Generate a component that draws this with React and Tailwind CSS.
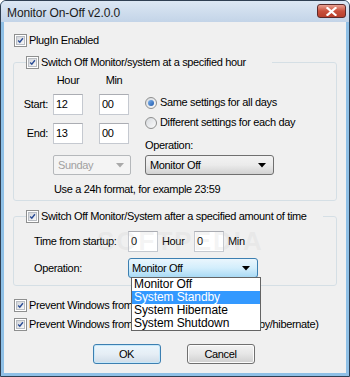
import React from "react";

function Check({ checked = true }) {
  return (
    <div className="w-[13px] h-[13px] shrink-0 border border-[#8e8f8f] bg-white p-[1px]">
      <div className="w-full h-full bg-gradient-to-br from-[#d2d5da] to-[#f8f8f8] border border-[#b9bdc3] flex items-center justify-center">
        {checked && (
          <svg width="9" height="9" viewBox="0 0 9 9">
            <path d="M1.5 4.6 L3.6 6.8 L7.6 1.6" fill="none" stroke="#2b4d96" strokeWidth="1.8" />
          </svg>
        )}
      </div>
    </div>
  );
}

function Radio({ on }) {
  return (
    <div className="w-[12px] h-[12px] shrink-0 rounded-full border border-[#8e8f8f] bg-gradient-to-br from-[#d7dade] to-[#fbfbfb] flex items-center justify-center">
      {on && <div className="w-[6px] h-[6px] rounded-full bg-gradient-to-br from-[#7fb3ec] to-[#1d5aae]" />}
    </div>
  );
}

function Input({ v, w = "w-[30px]" }) {
  return (
    <div className={`${w} h-[21px] bg-white border border-[#c5c9d0] border-t-[#abadb3] pl-[2px] pt-[3px] leading-[13px]`}>
      {v}
    </div>
  );
}

function Arrow({ c = "#000" }) {
  return (
    <svg width="8" height="5" viewBox="0 0 8 5" className="shrink-0">
      <path d="M0 0 H8 L4 4.5 Z" fill={c} />
    </svg>
  );
}

export default function App() {
  return (
    <div className="relative w-[350px] h-[377px] overflow-hidden bg-[#8fc0e6] border border-[#2f3f52] rounded-t-[6px] flex flex-col font-['Liberation_Sans',Arial,sans-serif] text-[11px] leading-[13px] tracking-[-0.35px] text-black">
      {/* title bar */}
      <div className="h-[21px] shrink-0 bg-gradient-to-b from-[#dce7f3] to-[#c3d4e8] flex items-start justify-between pl-[6px] pr-[3px]">
        <div className="text-[12px] leading-[14px] pt-[5px] tracking-[-0.1px] text-[#1a1a1a]">Monitor On-Off v2.0.0</div>
        <div className="mt-[3px] w-[29px] h-[14px] rounded-[3px] border border-[#5c2a2a] bg-gradient-to-b from-[#e8a193] via-[#c9503c] to-[#b8402c] flex items-center justify-center">
          <svg width="11" height="9" viewBox="0 0 11 9">
            <path d="M1.5 1 L9.5 8 M9.5 1 L1.5 8" stroke="#fff" strokeWidth="2.2" strokeLinecap="square" />
          </svg>
        </div>
      </div>

      {/* client */}
      <div className="flex-1 mx-[3px] mb-[3px] bg-[#f0f0f0] flex flex-col pt-[12px]">
        <div className="flex items-center ml-[10px] h-[13px]">
          <Check />
          <span className="ml-[2px]">PlugIn Enabled</span>
        </div>

        {/* group 1 */}
        <fieldset className="mt-[9px] ml-[9px] w-[324px] h-[145px] border border-[#d5dfe5] rounded-[3px]">
          <legend className="ml-[12px] pr-[26px]">
            <div className="flex items-center h-[13px] bg-[#f0f0f0]">
              <Check />
              <span className="ml-[2px]">Switch Off Monitor/system at a specified hour</span>
            </div>
          </legend>
          <div className="flex mt-[5px] pl-[39px]">
            <div className="w-[30px] text-center">Hour</div>
            <div className="w-[30px] ml-[16px] text-center">Min</div>
          </div>
          <div className="flex mt-[7px]">
            <div className="flex flex-col">
              <div className="flex items-center">
                <div className="w-[34px] text-right">Start:</div>
                <div className="ml-[5px]"><Input v="12" /></div>
                <div className="ml-[16px]"><Input v="00" /></div>
              </div>
              <div className="flex items-center mt-[8px]">
                <div className="w-[34px] text-right">End:</div>
                <div className="ml-[5px]"><Input v="13" /></div>
                <div className="ml-[16px]"><Input v="00" /></div>
              </div>
            </div>
            <div className="flex flex-col ml-[16px]">
              <div className="flex items-center mt-[2px] h-[13px]">
                <Radio on />
                <span className="ml-[3px]">Same settings for all days</span>
              </div>
              <div className="flex items-center mt-[7px] h-[13px]">
                <Radio />
                <span className="ml-[3px]">Different settings for each day</span>
              </div>
              <div className="mt-[10px]">Operation:</div>
            </div>
          </div>
          <div className="flex mt-[3px] ml-[39px]">
            <div className="w-[78px] h-[20px] rounded-[2px] border border-[#b5b8bb] bg-[#f4f4f4] text-[#a0a0a0] flex items-center justify-between pl-[4px] pr-[6px]">
              <span>Sunday</span>
              <Arrow c="#a9a9a9" />
            </div>
            <div className="ml-[14px] w-[129px] h-[20px] rounded-[3px] border border-[#707070] bg-gradient-to-b from-[#f3f3f3] via-[#ebebeb] to-[#d2d2d2] flex items-center justify-between pl-[4px] pr-[7px]">
              <span>Monitor Off</span>
              <Arrow />
            </div>
          </div>
          <div className="mt-[8px] ml-[40px]">Use a 24h format, for example 23:59</div>
        </fieldset>

        {/* group 2 */}
        <fieldset className="mt-[9px] ml-[9px] w-[324px] h-[76px] border border-[#d5dfe5] rounded-[3px]">
          <legend className="ml-[12px] pr-[16px]">
            <div className="flex items-center h-[13px] bg-[#f0f0f0]">
              <Check />
              <span className="ml-[2px]">Switch Off Monitor/System after a specified amount of time</span>
            </div>
          </legend>
          <div className="flex items-center mt-[8px] ml-[20px]">
            <div className="w-[94px]">Time from startup:</div>
            <Input v="0" />
            <div className="w-[36px] pl-[4px]">Hour</div>
            <Input v="0" />
            <div className="pl-[4px]">Min</div>
          </div>
          <div className="flex items-center mt-[6px] ml-[20px]">
            <div className="w-[94px]">Operation:</div>
            <div className="w-[130px] h-[20px] rounded-[3px] border border-[#3c7fb1] bg-gradient-to-b from-[#eaf6fd] via-[#d3eefc] to-[#a9daf5] flex items-center justify-between pl-[3px] pr-[7px]">
              <span>Monitor Off</span>
              <Arrow />
            </div>
          </div>
        </fieldset>

        <div className="flex items-center ml-[10px] mt-[13px] h-[13px]">
          <Check />
          <span className="ml-[2px]">Prevent Windows from shutting down</span>
        </div>
        <div className="flex items-center ml-[10px] mt-[6px] h-[13px]">
          <Check />
          <span className="ml-[2px]">Prevent Windows from going to sleep mode (standby/hibernate)</span>
        </div>

        <div className="flex justify-center gap-[26px] mt-[13px] -ml-[3px]">
          <div className="w-[68px] h-[20px] rounded-[3px] border border-[#3c7fb1] bg-gradient-to-b from-[#eaf6fd] via-[#e6eef5] to-[#cfdce8] shadow-[inset_0_0_0_1px_#c6e8fa] flex items-center justify-center">
            OK
          </div>
          <div className="w-[68px] h-[20px] rounded-[3px] border border-[#707070] bg-gradient-to-b from-[#f3f3f3] via-[#e6e6e6] to-[#cfcfcf] shadow-[inset_0_0_0_1px_#fcfcfc] flex items-center justify-center">
            Cancel
          </div>
        </div>
      </div>

      {/* watermark */}
      <div className="absolute left-[96px] top-[226px] text-[26px] leading-[28px] font-bold tracking-[2px] text-[rgba(200,200,200,0.2)] pointer-events-none">
        SOFTPEDIA
      </div>

      {/* dropdown list overlay */}
      <div className="absolute left-[130px] top-[276px] w-[130px] bg-white border border-[#646464] text-[12px] leading-[13px] tracking-[-0.1px]">
        <div className="h-[13px] pl-[2px]">Monitor Off</div>
        <div className="h-[13px] pl-[2px] bg-[#3399ff] text-white">System Standby</div>
        <div className="h-[13px] pl-[2px]">System Hibernate</div>
        <div className="h-[13px] pl-[2px]">System Shutdown</div>
      </div>
    </div>
  );
}
